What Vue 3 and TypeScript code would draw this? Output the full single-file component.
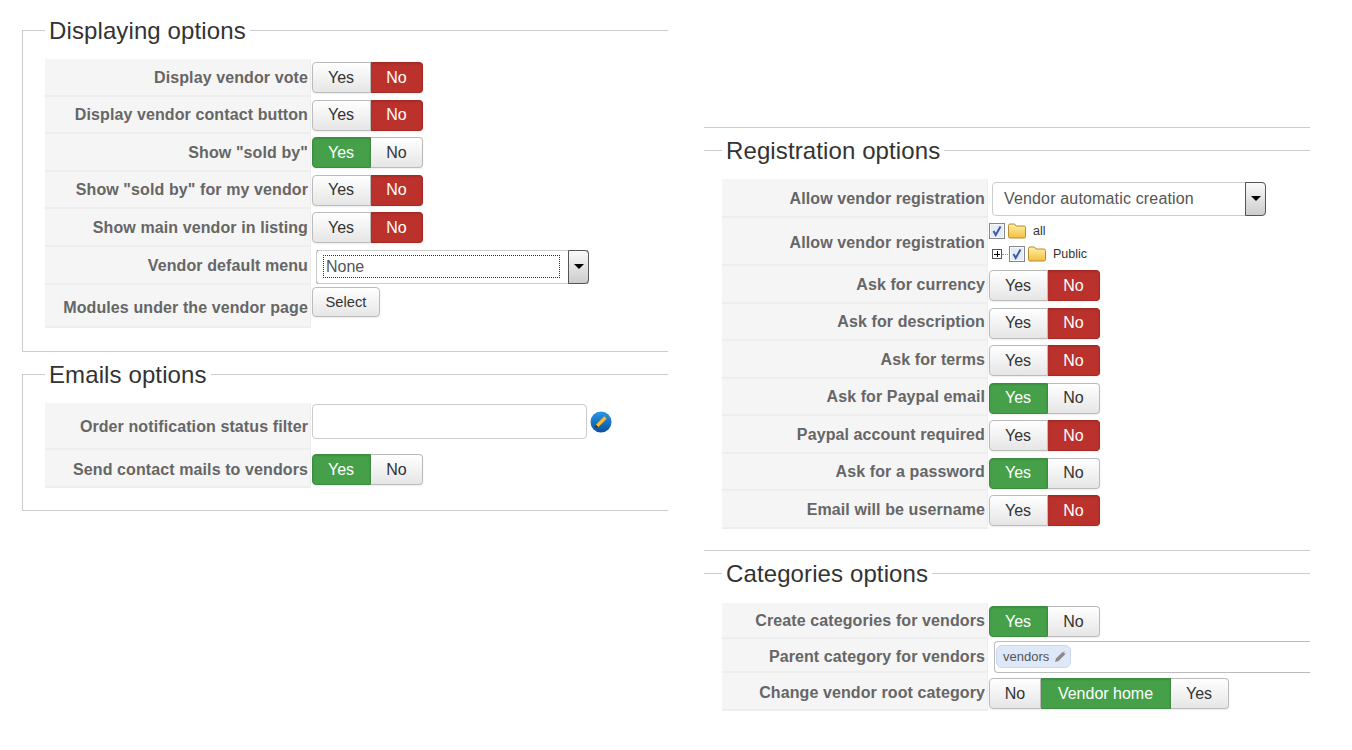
<script setup lang="ts">
type Opt = { text: string; state?: "yes" | "no" };
type Row = { label: string; kind: string; opts?: Opt[]; h?: number; top?: number; low?: boolean };

const yes = (): Opt[] => [{ text: "Yes", state: "yes" }, { text: "No" }];
const no = (): Opt[] => [{ text: "Yes" }, { text: "No", state: "no" }];

const displaying: Row[] = [
  { label: "Display vendor vote", kind: "toggle", opts: no() },
  { label: "Display vendor contact button", kind: "toggle", opts: no() },
  { label: 'Show "sold by"', kind: "toggle", opts: yes() },
  { label: 'Show "sold by" for my vendor', kind: "toggle", opts: no() },
  { label: "Show main vendor in listing", kind: "toggle", opts: no() },
  { label: "Vendor default menu", kind: "menu", h: 38.5 },
  { label: "Modules under the vendor page", kind: "select-btn", h: 43, top: 2, low: true },
];

const emails: Row[] = [
  { label: "Order notification status filter", kind: "status", h: 47 },
  { label: "Send contact mails to vendors", kind: "toggle", opts: yes(), h: 38, top: 4, low: true },
];

const registration: Row[] = [
  { label: "Allow vendor registration", kind: "creation", h: 39, top: 3 },
  { label: "Allow vendor registration", kind: "tree", h: 48, top: 2, low: true },
  { label: "Ask for currency", kind: "toggle", opts: no() },
  { label: "Ask for description", kind: "toggle", opts: no() },
  { label: "Ask for terms", kind: "toggle", opts: no() },
  { label: "Ask for Paypal email", kind: "toggle", opts: yes() },
  { label: "Paypal account required", kind: "toggle", opts: no() },
  { label: "Ask for a password", kind: "toggle", opts: yes() },
  { label: "Email will be username", kind: "toggle", opts: no() },
];

const categories: Row[] = [
  { label: "Create categories for vendors", kind: "toggle", opts: yes(), h: 36, top: 3 },
  { label: "Parent category for vendors", kind: "tag", h: 34, top: 2, low: true },
  {
    label: "Change vendor root category",
    kind: "toggle",
    h: 38,
    top: 5,
    low: true,
    opts: [{ text: "No" }, { text: "Vendor home", state: "yes" }, { text: "Yes" }],
  },
];

const sections = {
  left: [
    { title: "Displaying options", rows: displaying, cls: "boxed first" },
    { title: "Emails options", rows: emails, cls: "boxed second" },
  ],
  right: [
    { title: "Registration options", rows: registration, cls: "open" },
    { title: "Categories options", rows: categories, cls: "open cat" },
  ],
};
</script>

<template>
  <div class="page">
    <div v-for="(list, side) in sections" :key="side" class="column" :class="side">
      <template v-for="sec in list" :key="sec.title">
        <hr v-if="sec.cls.startsWith('open')" class="rule" />
        <fieldset :class="sec.cls">
          <legend>{{ sec.title }}</legend>
          <div
            v-for="row in sec.rows"
            :key="row.label + row.kind"
            class="row"
            :style="row.h ? { height: row.h + 'px' } : undefined"
          >
            <div class="key" :class="{ low: row.low }">{{ row.label }}</div>
            <div class="value" :style="row.top ? { paddingTop: row.top + 'px' } : undefined">
              <div v-if="row.kind === 'toggle'" class="toggle">
                <span
                  v-for="opt in row.opts"
                  :key="opt.text"
                  class="opt"
                  :class="[opt.state, 'w' + opt.text.length]"
                >{{ opt.text }}</span>
              </div>

              <div v-else-if="row.kind === 'menu'" class="dropdown focused">
                <span class="dropdown-text"><span>None</span></span>
                <span class="arrow"></span>
              </div>

              <div v-else-if="row.kind === 'creation'" class="dropdown">
                <span class="dropdown-text">Vendor automatic creation</span>
                <span class="arrow"></span>
              </div>

              <span v-else-if="row.kind === 'select-btn'" class="btn">Select</span>

              <div v-else-if="row.kind === 'status'" class="status">
                <div class="text-input"></div>
                <svg class="edit" width="22" height="22" viewBox="0 0 22 22">
                  <defs>
                    <linearGradient id="ball" x1="0" y1="0" x2="0" y2="1">
                      <stop offset="0" stop-color="#2a97ea" />
                      <stop offset="1" stop-color="#0a4f9e" />
                    </linearGradient>
                  </defs>
                  <circle cx="11" cy="11" r="10.500" fill="url(#ball)" />
                  <path d="M7 15L15.500 6.500" stroke="#f6bd3a" stroke-width="3.200" fill="none" />
                  <path d="M5 17l1-3.200 2.200 2.200z" fill="#3a2a1a" />
                </svg>
              </div>

              <div v-else-if="row.kind === 'tree'" class="tree">
                <div class="node">
                  <span class="check">
                    <svg width="14" height="14" viewBox="0 0 14 14">
                      <path d="M3.500 7l2.200 4L10.500 2.500" fill="none" stroke="#3b5aa8" stroke-width="2" />
                    </svg>
                  </span>
                  <svg class="folder" width="18" height="16" viewBox="0 0 18 16">
                    <defs>
                      <linearGradient id="fold" x1="0" y1="0" x2="0" y2="1">
                        <stop offset="0" stop-color="#fff0a6" />
                        <stop offset="1" stop-color="#f0c040" />
                      </linearGradient>
                    </defs>
                    <path d="M.5 2.500q0-1.500 1.500-1.500h4.500l1.500 2h8q1.500 0 1.500 1.500v9q0 1.500-1.500 1.500H2q-1.500 0-1.500-1.500z" fill="url(#fold)" stroke="#b98a2e" />
                  </svg>
                  <span class="node-text">all</span>
                </div>
                <div class="node child">
                  <span class="plus"></span>
                  <span class="dots"></span>
                  <span class="check">
                    <svg width="14" height="14" viewBox="0 0 14 14">
                      <path d="M3.500 7l2.200 4L10.500 2.500" fill="none" stroke="#3b5aa8" stroke-width="2" />
                    </svg>
                  </span>
                  <svg class="folder" width="18" height="16" viewBox="0 0 18 16">
                    <path d="M.5 2.500q0-1.500 1.500-1.500h4.500l1.500 2h8q1.500 0 1.500 1.500v9q0 1.500-1.500 1.500H2q-1.500 0-1.500-1.500z" fill="url(#fold)" stroke="#b98a2e" />
                  </svg>
                  <span class="node-text">Public</span>
                </div>
              </div>

              <div v-else-if="row.kind === 'tag'" class="tagbox">
                <span class="tag">
                  vendors
                  <svg width="13" height="13" viewBox="0 0 13 13">
                    <path d="M1 12l1-3.500 6.800-6.800 2.500 2.500L4.500 11z" fill="#8a8a8a" />
                    <path d="M9.500 1l2.500 2.500" stroke="#bbb" fill="none" />
                  </svg>
                </span>
              </div>
            </div>
          </div>
        </fieldset>
      </template>
    </div>
  </div>
</template>

<style scoped>
.page {
  display: flex;
  font-family: "Liberation Sans", Arial, sans-serif;
  color: #333;
  height: 750px;
  overflow: hidden;
  padding-left: 22px;
  box-sizing: border-box;
}
.column {
  display: flex;
  flex-direction: column;
}
.left {
  width: 646px;
  padding-top: 14px;
}
.right {
  width: 606px;
  margin-left: 36px;
  padding-top: 127px;
}
.rule {
  margin: 0 0 6px;
  border: 0;
  border-top: 1px solid #ccc;
  height: 0;
}
.right fieldset + .rule {
  margin-top: 21.5px;
}
fieldset {
  margin: 0;
  border: 1px solid #ccc;
  border-right: 0;
  padding: 0 0 0 22px;
  min-width: 0;
}
.boxed {
  padding-bottom: 22px;
}
.first {
  padding-bottom: 23px;
}
.second {
  margin-top: 6px;
}
.open {
  border-left: 0;
  border-bottom: 0;
  padding-left: 18px;
}
legend {
  font-size: 24px;
  line-height: 30px;
  padding: 2px 4px 0;
  letter-spacing: 0.11px;
  color: #333;
  margin-bottom: 13px;
}
.cat legend {
  margin-bottom: 14px;
}
.row {
  display: flex;
  height: 37.5px;
}
.key {
  width: 266px;
  box-sizing: border-box;
  background: #f5f5f5;
  border-right: 1px solid #eee;
  border-bottom: 2px solid #eee;
  padding: 2px 2px 0 0;
  font-size: 16px;
  font-weight: bold;
  letter-spacing: 0.1px;
  color: #666;
  display: flex;
  align-items: center;
  justify-content: flex-end;
}
.key.low {
  padding-top: 4px;
}
.value {
  flex: 1;
  padding: 3px 0 0 1px;
  min-width: 0;
}
.right .value {
  padding-top: 4px;
}
.toggle {
  display: inline-flex;
  height: 31px;
  border-radius: 4px;
  box-shadow: 0 1px 2px rgba(0, 0, 0, 0.08);
}
.opt {
  box-sizing: border-box;
  display: flex;
  align-items: center;
  justify-content: center;
  font-size: 16px;
  color: #333;
  background: linear-gradient(#fff, #e6e6e6);
  border: 1px solid #bbb;
  border-left-width: 0;
}
.opt:first-child {
  border-left-width: 1px;
  border-radius: 4px 0 0 4px;
}
.opt:last-child {
  border-radius: 0 4px 4px 0;
}
.w3 {
  width: 59px;
  padding-right: 1px;
}
.w2 {
  width: 52px;
}
.w11 {
  width: 130px;
}
.w11 + .w3 {
  width: 58px;
}
.opt.yes {
  background: #46a049;
  border-color: #3d8b40;
  color: #fff;
  box-shadow: inset 0 1px 2px rgba(0, 0, 0, 0.12);
}
.opt.no {
  background: #bb322c;
  border-color: #a32a25;
  color: #fff;
  box-shadow: inset 0 1px 2px rgba(0, 0, 0, 0.12);
}
.dropdown {
  box-sizing: border-box;
  position: relative;
  width: 274px;
  height: 34px;
  margin: 0 0 0 3px;
  border: 1px solid #ccc;
  border-radius: 4px;
  background: #fff;
  display: flex;
  align-items: center;
  font-size: 16px;
  color: #555;
}
.dropdown-text {
  padding-left: 11px;
  letter-spacing: 0.16px;
}
.focused {
  width: 273px;
  margin-left: 4px;
  border: 1px dotted #222;
  outline: 1px solid #ccc;
  outline-offset: -1px;
  border-radius: 3px;
}
.focused .dropdown-text {
  position: absolute;
  left: 6px;
  top: 4px;
  width: 237px;
  height: 23px;
  box-sizing: border-box;
  border: 1px dotted #333;
  padding-left: 2px;
  line-height: 21px;
  letter-spacing: 0;
}
.arrow {
  position: absolute;
  top: -1px;
  right: -1px;
  bottom: -1px;
  width: 21px;
  box-sizing: border-box;
  border: 1px solid #555;
  border-radius: 0 4px 4px 0;
  background: linear-gradient(#fafafa, #ccc);
}
.arrow::after {
  content: "";
  position: absolute;
  left: 5px;
  top: 13px;
  border: 5px solid transparent;
  border-top: 5px solid #000;
  border-bottom: 0;
}
.btn {
  box-sizing: border-box;
  display: inline-flex;
  align-items: center;
  justify-content: center;
  width: 68px;
  height: 30px;
  padding-bottom: 1px;
  font-size: 14.7px;
  color: #333;
  background: linear-gradient(#fff, #e6e6e6);
  border: 1px solid #bbb;
  border-radius: 4px;
  box-shadow: 0 1px 2px rgba(0, 0, 0, 0.08);
}
.status {
  display: flex;
  align-items: center;
  gap: 3px;
  margin-top: -2px;
}
.text-input {
  box-sizing: border-box;
  width: 275px;
  height: 35px;
  border: 1px solid #ccc;
  border-radius: 4px;
  background: #fff;
}
.edit {
  flex: none;
}
.tree {
  font-size: 12.500px;
  color: #333;
}
.node {
  display: flex;
  align-items: center;
  gap: 3px;
  height: 22px;
}
.child {
  height: 23px;
  padding-left: 3px;
  padding-top: 1px;
  box-sizing: border-box;
}
.check {
  box-sizing: border-box;
  width: 16px;
  height: 16px;
  border: 1px solid #888;
  background: #e6ebf6;
  box-shadow: inset 0 0 0 1px #f6f7fb;
  display: flex;
}
.folder {
  flex: none;
}
.node-text {
  margin-left: 4px;
}
.plus {
  box-sizing: border-box;
  width: 10px;
  height: 10px;
  border: 1px solid #555;
  background:
    linear-gradient(#000, #000) center / 6px 1px no-repeat,
    linear-gradient(#000, #000) center / 1px 6px no-repeat,
    #fff;
}
.dots {
  width: 6px;
  border-top: 1px dotted #999;
  margin: 0 -2px 0 -3px;
}
.tagbox {
  box-sizing: border-box;
  height: 32px;
  margin-left: 5px;
  border: 1px solid #bbb;
  border-right: 0;
  border-radius: 4px 0 0 4px;
  padding: 3px 0 0 1px;
}
.tag {
  display: inline-flex;
  align-items: center;
  gap: 5px;
  box-sizing: border-box;
  height: 23px;
  padding: 0 3px 0 6px;
  border: 1px solid #c9d7f1;
  border-radius: 6px;
  background: #dfe8f8;
  font-size: 13px;
  color: #555;
}
</style>
